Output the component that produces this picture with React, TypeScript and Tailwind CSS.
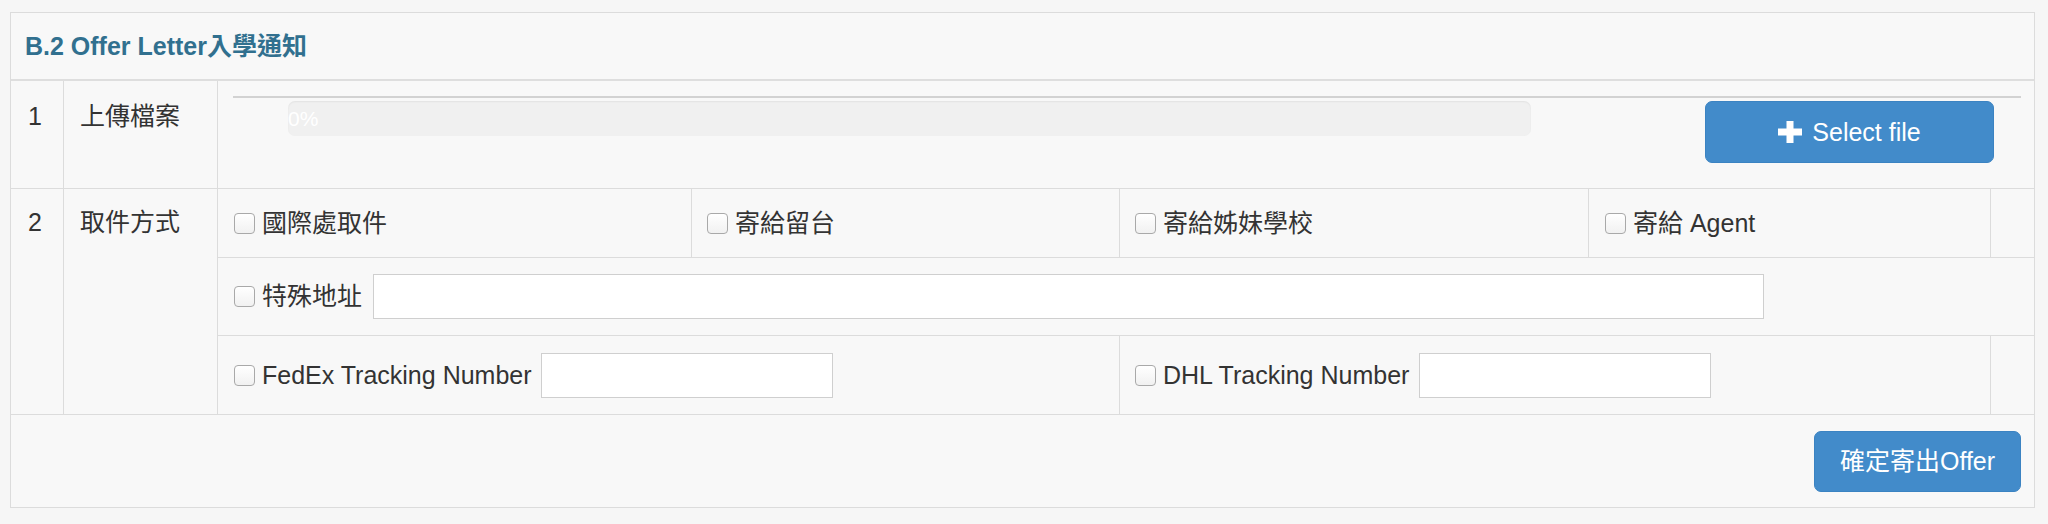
import React from "react";

function Check() {
  return (
    <span className="inline-block h-[21px] w-[21px] shrink-0 rounded-[4px] border border-[#a9a9a9] bg-gradient-to-b from-white to-[#f1f1f1]" />
  );
}

function CheckLabel({ label }: { label: string }) {
  return (
    <label className="flex items-center gap-[7px]">
      <Check />
      <span>{label}</span>
    </label>
  );
}

function PlusIcon() {
  return (
    <svg width="24" height="22" viewBox="0 0 24 22" className="shrink-0">
      <rect x="8.5" y="0" width="7" height="22" fill="white" />
      <rect x="0" y="7.5" width="24" height="7" fill="white" />
    </svg>
  );
}

export default function App() {
  return (
    <div className="h-[524px] w-[2048px] bg-[#f6f6f6] pt-[12px] pl-[10px] text-[25px] leading-[35px] text-[#333] font-['Liberation_Sans','Noto_Sans_CJK_TC',sans-serif]">
      <div className="w-[2025px] border border-[#dcdcdc] bg-[#f8f8f8]">
        {/* panel heading */}
        <div className="flex h-[68px] items-center border-b-2 border-[#dedede] px-[14px]">
          <h3 className="text-[25px] font-bold text-[#31708f]">B.2 Offer Letter入學通知</h3>
        </div>

        {/* row 1 */}
        <div className="flex h-[108px] border-b border-[#dcdcdc]">
          <div className="w-[53px] border-r border-[#dcdcdc] pl-[17px] pt-[18px]">1</div>
          <div className="w-[154px] border-r border-[#dcdcdc] pl-[16px] pt-[18px]">上傳檔案</div>
          <div className="flex-1 pt-[15px] pl-[15px] pr-[13px]">
            <div className="h-[2px] bg-[#d2d2d2]" />
            <div className="mt-[3px] flex items-start">
              <div className="ml-[55px] flex h-[35px] w-[1243px] items-center overflow-hidden rounded-[7px] bg-[#f0f0f0] shadow-[inset_0_1px_2px_rgba(0,0,0,0.06)]">
                <span className="text-[21px] leading-[35px] text-white">0%</span>
              </div>
              <button className="ml-auto mr-[27px] flex h-[62px] w-[289px] items-center justify-center gap-[10px] rounded-[7px] border border-[#3b83c2] bg-[#428bca] text-white">
                <PlusIcon />
                <span>Select file</span>
              </button>
            </div>
          </div>
        </div>

        {/* row 2 */}
        <div className="flex h-[226px] border-b border-[#dcdcdc]">
          <div className="w-[53px] border-r border-[#dcdcdc] pl-[17px] pt-[16px]">2</div>
          <div className="w-[154px] border-r border-[#dcdcdc] pl-[16px] pt-[16px]">取件方式</div>
          <div className="flex flex-1 flex-col">
            <div className="flex h-[69px] border-b border-[#dcdcdc]">
              <div className="flex w-[474px] items-center border-r border-[#dcdcdc] pl-[16px]">
                <CheckLabel label="國際處取件" />
              </div>
              <div className="flex w-[428px] items-center border-r border-[#dcdcdc] pl-[15px]">
                <CheckLabel label="寄給留台" />
              </div>
              <div className="flex w-[469px] items-center border-r border-[#dcdcdc] pl-[15px]">
                <CheckLabel label="寄給姊妹學校" />
              </div>
              <div className="flex w-[402px] items-center border-r border-[#dcdcdc] pl-[16px]">
                <CheckLabel label="寄給 Agent" />
              </div>
              <div className="flex-1" />
            </div>
            <div className="flex h-[78px] items-center border-b border-[#dcdcdc] pl-[16px]">
              <CheckLabel label="特殊地址" />
              <input className="ml-[11px] h-[45px] w-[1391px] border border-[#cfcfcf] bg-white outline-none" />
            </div>
            <div className="flex flex-1">
              <div className="flex w-[902px] items-center border-r border-[#dcdcdc] pl-[16px]">
                <CheckLabel label="FedEx Tracking Number" />
                <input className="ml-[9px] h-[45px] w-[292px] border border-[#cfcfcf] bg-white outline-none" />
              </div>
              <div className="flex w-[871px] items-center border-r border-[#dcdcdc] pl-[15px]">
                <CheckLabel label="DHL Tracking Number" />
                <input className="ml-[10px] h-[45px] w-[292px] border border-[#cfcfcf] bg-white outline-none" />
              </div>
              <div className="flex-1" />
            </div>
          </div>
        </div>

        {/* footer */}
        <div className="flex h-[92px] items-center justify-end pr-[13px]">
          <button className="h-[61px] w-[207px] rounded-[7px] border border-[#3b83c2] bg-[#428bca] text-white">
            確定寄出Offer
          </button>
        </div>
      </div>
    </div>
  );
}
